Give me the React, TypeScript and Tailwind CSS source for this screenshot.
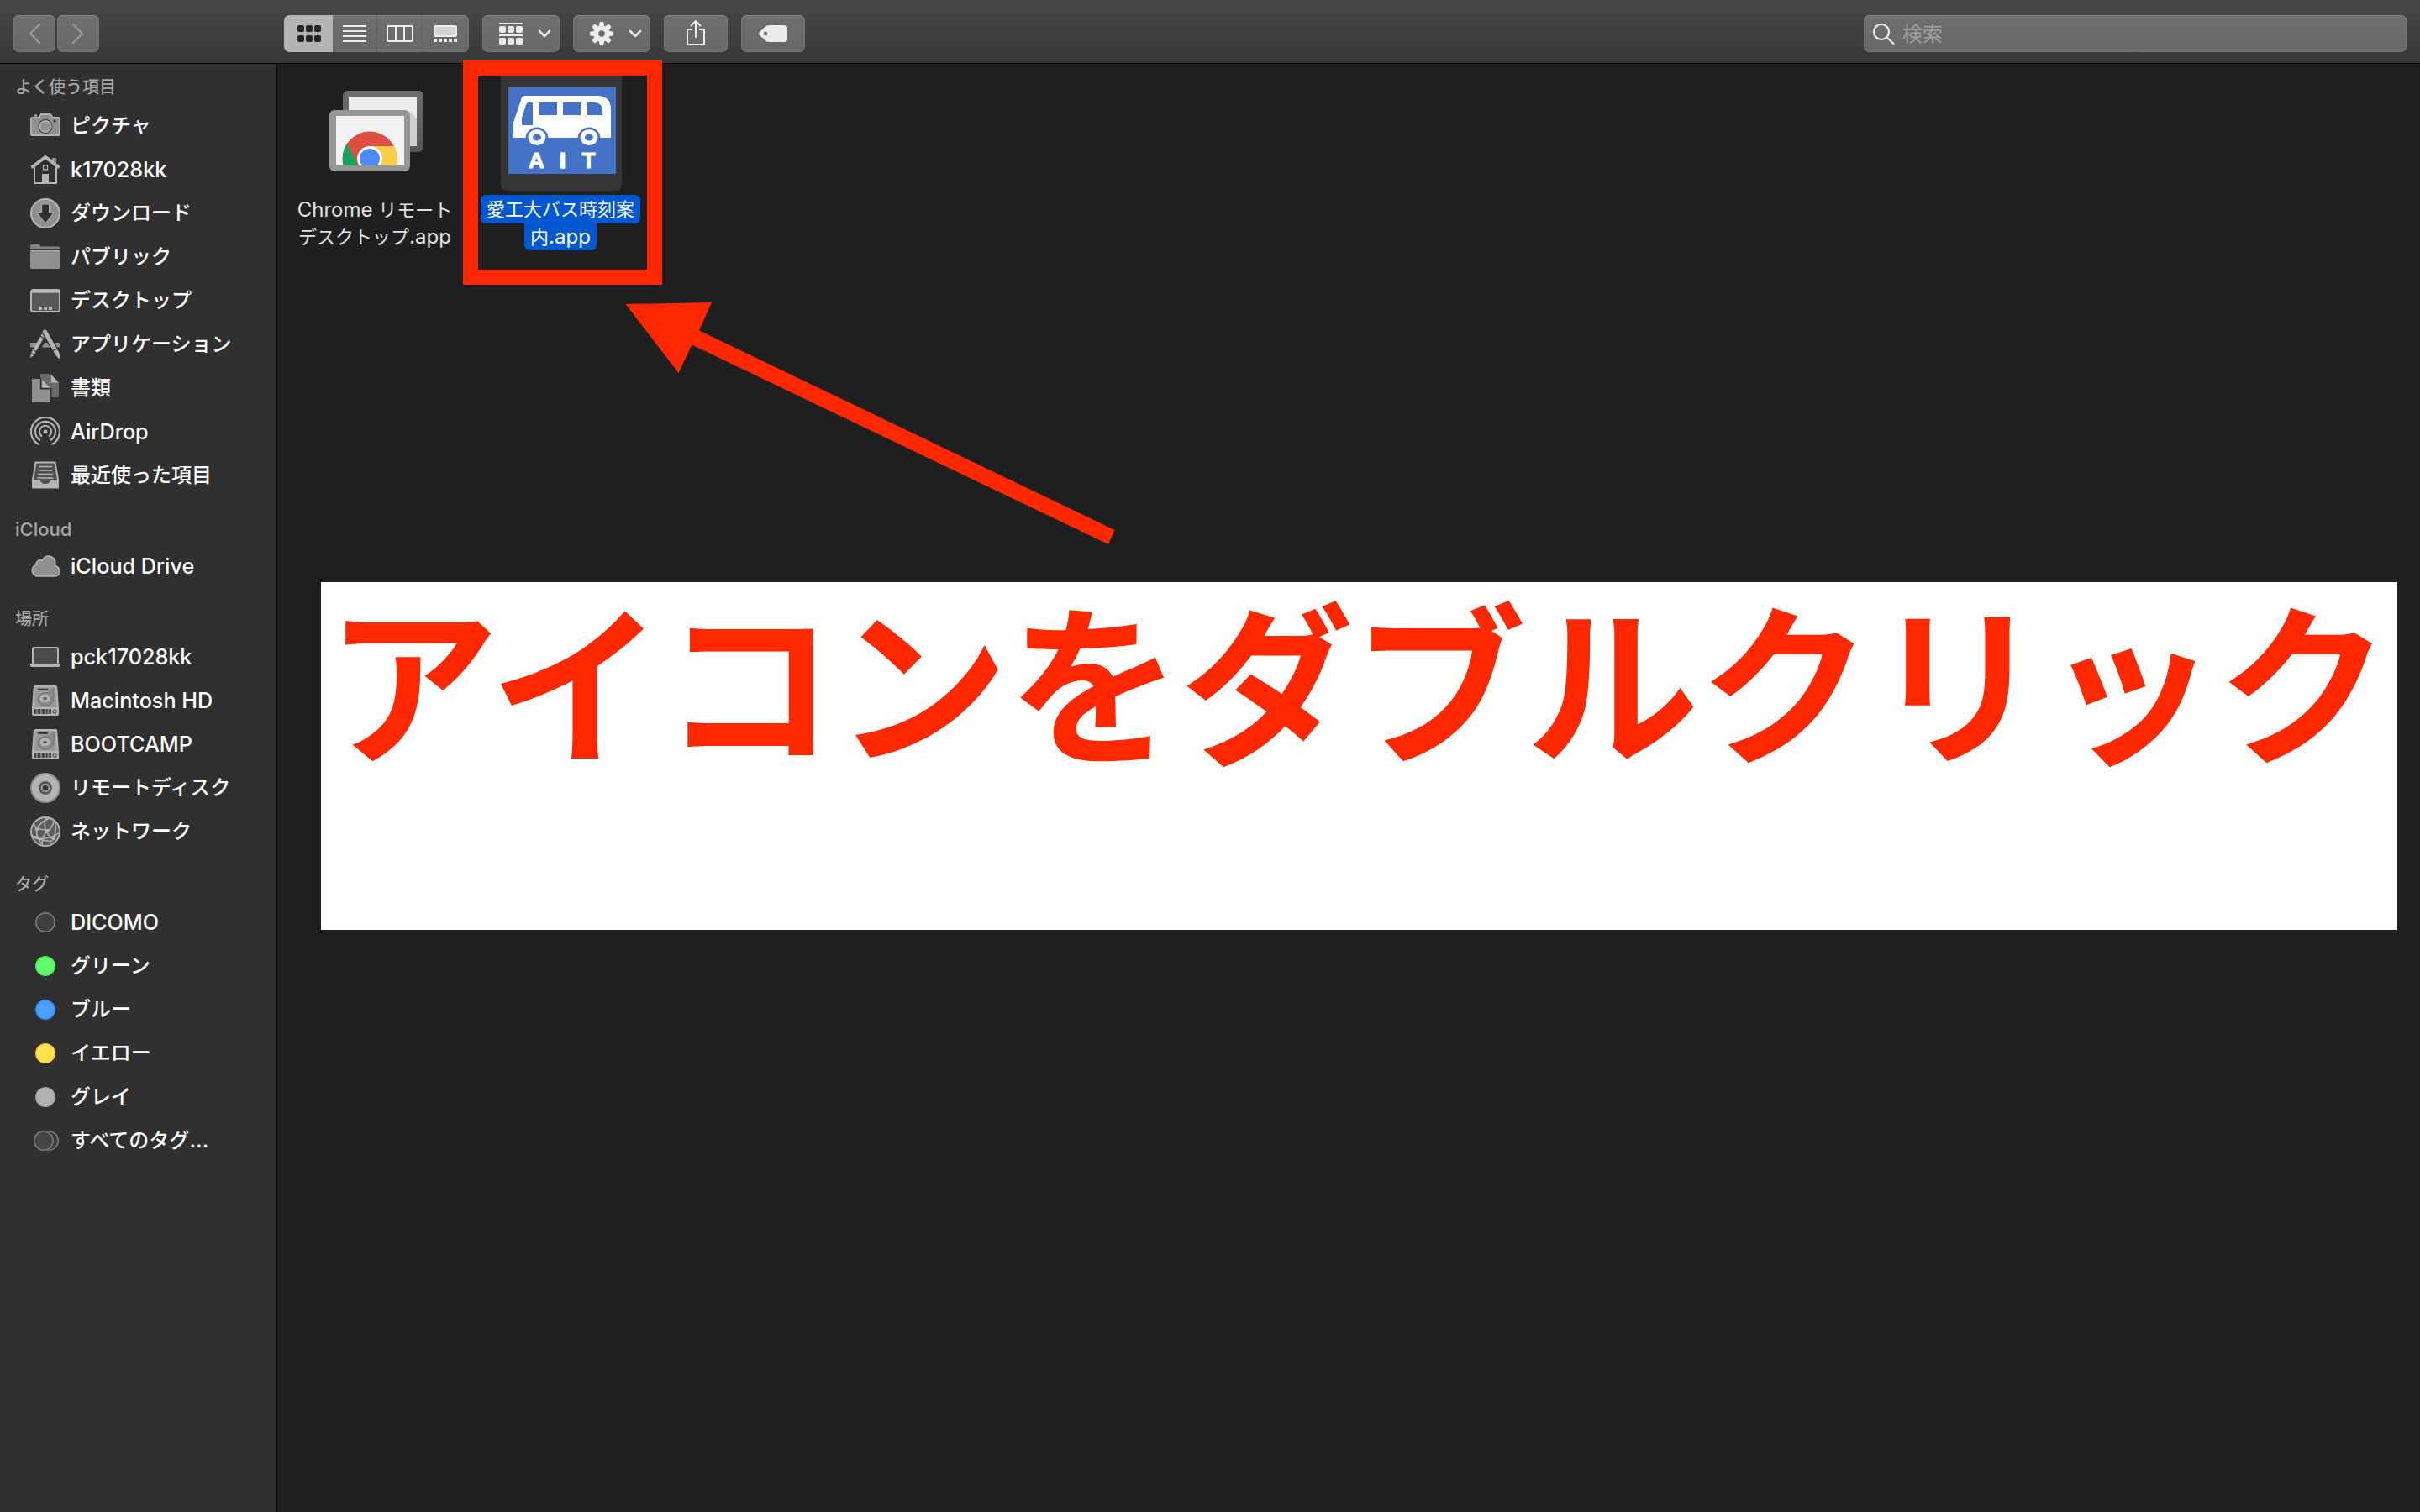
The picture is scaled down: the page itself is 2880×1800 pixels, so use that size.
import React from "react";

const JP = /([\u3000-\u30ff\u4e00-\u9fff]+)/;

/* Renders mixed text; Japanese runs are set slightly smaller than Latin ones. */
function Mixed({ text, jp }: { text: string; jp: string }) {
  return (
    <>
      {text.split(JP).map((part, i) =>
        part === "" ? null : JP.test(part) ? (
          <span key={i} className={jp}>{part}</span>
        ) : (
          <span key={i}>{part}</span>
        )
      )}
    </>
  );
}

const G = "#b4b4b4";
const M = "#909090";
const BG = "#303030";

function Svg({ children }: { children: React.ReactNode }) {
  return (
    <svg width="36" height="36" viewBox="0 0 36 36" fill="none" className="block shrink-0">
      {children}
    </svg>
  );
}

const Camera = () => (
  <Svg>
    <rect x="4" y="4.500" width="4" height="2" fill={G} />
    <path d="M2 8h8l3-4h11l3 4h7a1 1 0 0 1 1 1v19a1 1 0 0 1-1 1H2a1 1 0 0 1-1-1V9a1 1 0 0 1 1-1z" fill={M} stroke={G} strokeWidth="1.800" />
    <circle cx="18" cy="18.500" r="8.500" fill={BG} />
    <circle cx="18" cy="18.500" r="6.700" fill={M} stroke={G} strokeWidth="1.800" />
    <circle cx="29" cy="12" r="1.500" fill={BG} />
  </Svg>
);
const House = () => (
  <Svg>
    <path d="M26 4h5v10l-5-5z" fill={M} />
    <path d="M5 14v20h26V14" stroke={G} strokeWidth="2" />
    <path d="M1.500 15.500 18 3l16.500 12.500" stroke={G} strokeWidth="4" />
    <rect x="15.500" y="13" width="5" height="5" stroke={G} strokeWidth="1.200" />
    <rect x="14" y="23" width="8" height="11" fill={G} />
  </Svg>
);
const Download = () => (
  <Svg>
    <circle cx="18" cy="18" r="17" fill={M} stroke={G} strokeWidth="2" />
    <path d="M13.500 7h9v10H28L18 30 8 17h5.500z" fill={BG} stroke={G} strokeWidth="1" />
  </Svg>
);
const Folder = () => (
  <Svg>
    <path d="M0 9V5q0-2 2-2h8q1.500 0 2.500 2.500H34q2 0 2 2V9z" fill="#838383" />
    <path d="M0 11q0-1 1-1h34q1 0 1 1v19q0 2-2 2H2q-2 0-2-2z" fill={M} />
    <path d="M1 10.500h34" stroke={G} strokeWidth="1" />
  </Svg>
);
const Desktop = () => (
  <Svg>
    <rect x="1" y="5" width="34" height="26" rx="2.500" fill="#585858" stroke={G} strokeWidth="2" />
    <path d="M1 7h34" stroke={G} strokeWidth="3.500" />
    <path d="M10 25h4v4h-4zM16 25h4v4h-4zM22 25h4v4h-4z" fill={G} />
  </Svg>
);
const Apps = () => (
  <Svg>
    <path d="M0 16h9l-3 5.500H0zM17 16h5l3 5.500H14zM27 16h9v5.500h-6z" fill={M} />
    <path d="M16 6 3 29" stroke={G} strokeWidth="4.500" />
    <path d="m1 29-1 5 4.500-3z" fill={G} />
    <path d="m17.500 3 14 25" stroke={BG} strokeWidth="7.500" />
    <path d="m17.500 3 14 25" stroke={G} strokeWidth="5" strokeLinecap="round" />
    <path d="m29 29 5-2.500 2 8-2 .5z" fill={G} />
    <path d="m12 8 5 3M26.500 26l6-3.500M4 25l4 2" stroke={BG} strokeWidth="1.300" />
  </Svg>
);
const Docs = () => (
  <Svg>
    <path d="M12 1h11v10h11v18H12z" fill="#6a6a6a" />
    <path d="M24.500 1.500 34 11.500h-9.500z" fill={G} />
    <path d="M2 7h11v11h11v17H2z" fill={M} />
    <path d="M12.500 6v12.800h12.200V34" stroke={BG} strokeWidth="1.500" />
    <path d="M14 8 23.500 17.500H14z" fill={G} />
  </Svg>
);
const AirDrop = () => (
  <Svg>
    <g stroke={G} strokeWidth="2.200">
      <path d="M10.500 33.200a17 17 0 1 1 15 0" />
      <path d="M12 28.200a12 12 0 1 1 12 0" />
      <path d="M14 23.500a7 7 0 1 1 8 0" />
    </g>
    <circle cx="18" cy="18" r="2.500" fill={G} />
  </Svg>
);
const Tray = () => (
  <Svg>
    <path d="M6.500 2.500h23L33 23v9.500H3V23z" fill="#505050" stroke={G} strokeWidth="2" strokeLinejoin="round" />
    <path d="M3 24h9q1 4 6 4t6-4h9v8.500H3z" fill={G} />
    <path d="M10 7.500h16M9.500 12h17M9 16.500h18M8.500 21h19" stroke={G} strokeWidth="1.600" />
  </Svg>
);
const Cloud = () => (
  <Svg>
    <path d="M8 30a7 7 0 0 1-1-13.500q0-5 5-6 1.500 0 2.500.500Q17 6 22 6q8 1 8 9 0 1.500-.5 2.500 5.500 1.500 5.500 6.500 0 6-6 6z" fill={M} stroke={G} strokeWidth="1.500" />
  </Svg>
);
const Laptop = () => (
  <Svg>
    <rect x="3" y="7" width="30" height="20" rx="1.500" fill="#4c4c4c" stroke={G} strokeWidth="2" />
    <path d="M0 26h36v1.500q0 2.500-2.500 2.500h-31Q0 30 0 27.500z" fill={G} />
  </Svg>
);
const Drive = () => (
  <Svg>
    <path d="M6 0h24q2 0 2.200 2L34 27v7q0 2-2 2H4q-2 0-2-2v-7L3.800 2Q4 0 6 0z" fill={G} />
    <path d="M6 2h24l1.500 24h-27z" fill="#9a9a9a" />
    <path d="M9 4.800h12" stroke={BG} strokeWidth="2" />
    <path d="M28 4v12q-1 8-11 8-8-1-8-8 1-7 10-7 5 0 9-5z" fill="#8a8a8a" stroke="#707070" strokeWidth="1" />
    <ellipse cx="17.500" cy="15.500" rx="6" ry="5" fill={G} />
    <ellipse cx="17.500" cy="15.500" rx="2.500" ry="1.800" fill="#5a5a5a" />
    <path d="M4 28h21v6H4z" fill="#484848" />
    <path d="M8 28v6M13 28v6M18 28v6M21.500 28v6" stroke={M} strokeWidth="1.500" />
    <circle cx="29" cy="31" r="2" stroke="#555" strokeWidth="1.200" />
  </Svg>
);
const Disc = () => (
  <Svg>
    <circle cx="18" cy="18" r="17" fill={G} stroke="#8c8c8c" strokeWidth="2" />
    <circle cx="18" cy="18" r="8" fill="#5a5a5a" />
    <circle cx="18" cy="18" r="4.300" fill="#3a3a3a" stroke={G} strokeWidth="1.500" />
  </Svg>
);
const Network = () => (
  <Svg>
    <circle cx="18" cy="18" r="17" fill="#5c5c5c" stroke={G} strokeWidth="1.800" />
    <g stroke={G} strokeWidth="1.500">
      <path d="M4 9q3 8 20 7M8 15q3-8 15-13M8 15q-2 8 6 18M19 1q-4 8 0 16t8 10M29 5q-4 10-9 13t-6 16M1 22q15 10 34-3M2 24l5 0q6 6 20 5M27 27q4-7 3-20" />
    </g>
    <circle cx="8" cy="15" r="2.300" fill={G} />
    <circle cx="7.500" cy="25" r="2.300" fill={G} />
    <circle cx="20" cy="17" r="2" fill={G} />
    <circle cx="28" cy="26" r="2.300" fill={G} />
  </Svg>
);
const Dot = ({ fill, stroke }: { fill: string; stroke: string }) => (
  <Svg>
    <circle cx="18" cy="18" r="11.200" fill={fill} stroke={stroke} strokeWidth="1.500" />
  </Svg>
);
const AllTags = () => (
  <Svg>
    <circle cx="22" cy="18" r="11.200" fill="#3c3c3c" stroke="#7d7d7d" strokeWidth="1.500" />
    <circle cx="16" cy="18" r="12.500" fill={BG} />
    <circle cx="16" cy="18" r="11.200" fill="#454545" stroke="#7d7d7d" strokeWidth="1.500" />
  </Svg>
);

type Item = { icon: React.ReactNode; label: string };
const sections: { title: string; head: string; text: string; items: Item[] }[] = [
  {
    title: "よく使う項目",
    head: "h-12",
    text: "text-[20px] pb-px",
    items: [
      { icon: <Camera />, label: "ピクチャ" },
      { icon: <House />, label: "k17028kk" },
      { icon: <Download />, label: "ダウンロード" },
      { icon: <Folder />, label: "パブリック" },
      { icon: <Desktop />, label: "デスクトップ" },
      { icon: <Apps />, label: "アプリケーション" },
      { icon: <Docs />, label: "書類" },
      { icon: <AirDrop />, label: "AirDrop" },
      { icon: <Tray />, label: "最近使った項目" },
    ],
  },
  { title: "iCloud", head: "h-14", text: "text-[22px] pt-1", items: [{ icon: <Cloud />, label: "iCloud Drive" }] },
  {
    title: "場所",
    head: "h-14",
    text: "text-[20px] pt-0.5",
    items: [
      { icon: <Laptop />, label: "pck17028kk" },
      { icon: <Drive />, label: "Macintosh HD" },
      { icon: <Drive />, label: "BOOTCAMP" },
      { icon: <Disc />, label: "リモートディスク" },
      { icon: <Network />, label: "ネットワーク" },
    ],
  },
  {
    title: "タグ",
    head: "h-14",
    text: "text-[20px] pt-0.5",
    items: [
      { icon: <Dot fill="#3f3f3f" stroke="#7d7d7d" />, label: "DICOMO" },
      { icon: <Dot fill="#62fb6c" stroke="#50e85c" />, label: "グリーン" },
      { icon: <Dot fill="#4a9fff" stroke="#2f8bf5" />, label: "ブルー" },
      { icon: <Dot fill="#ffe152" stroke="#f5cf35" />, label: "イエロー" },
      { icon: <Dot fill="#b2b2b2" stroke="#a3a3a3" />, label: "グレイ" },
      { icon: <AllTags />, label: "すべてのタグ..." },
    ],
  },
];

const btn =
  "flex h-11 shrink-0 items-center rounded-[7px] bg-gradient-to-b from-[#6f6f6f] to-[#686868] shadow-[inset_0_1px_0_#858585,inset_0_0_0_1px_#747474]";

const Chevron = () => (
  <svg width="16" height="10" viewBox="0 0 16 10" fill="none">
    <path d="m2 2 6 6 6-6" stroke="#e8e8e8" strokeWidth="2.600" strokeLinecap="round" strokeLinejoin="round" />
  </svg>
);

function Toolbar() {
  return (
    <header className="flex h-[76px] shrink-0 items-start border-b border-black bg-gradient-to-b from-[#474747] to-[#383838] pt-[18px] pl-4 pr-4">
      <div className="flex gap-0.5">
        <div className={`${btn} w-[50px] justify-center`}>
          <svg width="16" height="26" viewBox="0 0 16 26" fill="none">
            <path d="M14 2 3 13l11 11" stroke="#989898" strokeWidth="2.400" strokeLinecap="round" strokeLinejoin="round" />
          </svg>
        </div>
        <div className={`${btn} w-[50px] justify-center`}>
          <svg width="16" height="26" viewBox="0 0 16 26" fill="none">
            <path d="m2 2 11 11L2 24" stroke="#989898" strokeWidth="2.400" strokeLinecap="round" strokeLinejoin="round" />
          </svg>
        </div>
      </div>

      <div className={`${btn} ml-[220px] w-[220px] overflow-hidden`}>
        <div className="flex h-full w-[58px] items-center justify-center bg-[#b3b3b3] pl-0.5">
          <svg width="28" height="20" fill="#262626">
            {[0, 10, 20].map((x) => [0, 12].map((y) => <rect key={`${x}-${y}`} x={x} y={y} width="8" height="8" rx="2" />))}
          </svg>
        </div>
        <div className="flex h-full w-[53px] items-center border-r border-[#5f5f5f] pl-3">
          <svg width="28" height="20" fill="#ececec">
            {[0, 6, 12, 18].map((y) => <rect key={y} y={y} width="28" height="2" />)}
          </svg>
        </div>
        <div className="flex h-full w-[54px] items-center border-r border-[#5f5f5f] pl-[11px]">
          <svg width="32" height="20" fill="none" stroke="#ececec" strokeWidth="2">
            <rect x="1" y="1" width="30" height="18" rx="1.500" />
            <path d="M11 1v18M21 1v18" />
          </svg>
        </div>
        <div className="flex h-full w-[55px] items-center pl-[13px]">
          <svg width="28" height="20" fill="#ececec">
            <rect x="1" y="1" width="26" height="12" rx="1.500" fill="#d4d4d4" stroke="#ececec" strokeWidth="2" />
            {[0, 6, 12, 18, 24].map((x) => <rect key={x} x={x} y="16" width="4" height="4" />)}
          </svg>
        </div>
      </div>

      <div className={`${btn} ml-4 w-[92px] pl-5`}>
        <svg width="28" height="26" fill="#ececec">
          <rect width="28" height="2" />
          <rect y="14" width="28" height="2" />
          {[0, 10, 20].map((x) => [4, 18].map((y) => <rect key={`${x}-${y}`} x={x} y={y} width="8" height="8" rx="2" />))}
        </svg>
        <span className="ml-[18px]"><Chevron /></span>
      </div>

      <div className={`${btn} ml-4 w-[92px] pl-5`}>
        <svg width="28" height="28" viewBox="-14 -14 28 28" fill="none">
          <circle r="6.800" stroke="#ececec" strokeWidth="6" />
          {[0, 45, 90, 135, 180, 225, 270, 315].map((a) => (
            <path key={a} d="M-3.200-9h6.400L2.300-14h-4.600z" fill="#ececec" transform={`rotate(${a})`} />
          ))}
        </svg>
        <span className="ml-[18px]"><Chevron /></span>
      </div>

      <div className={`${btn} ml-4 w-[76px] justify-center`}>
        <svg width="22" height="32" viewBox="0 0 22 32" fill="none" stroke="#ececec" strokeWidth="2" className="-mt-0.5">
          <path d="M7 12H1v18h20V12h-6" />
          <path d="M11 21V2M5.500 7.500 11 2l5.500 5.500" strokeLinecap="round" strokeLinejoin="round" />
        </svg>
      </div>

      <div className={`${btn} ml-4 w-[76px] justify-center`}>
        <svg width="34" height="20" viewBox="0 0 34 20">
          <path d="M12 0h18.500Q34 0 34 3.500v13q0 3.500-3.500 3.500H12q-2.500 0-4.500-2L1 12q-2-2 0-4l6.500-6Q9.500 0 12 0z" fill="#ececec" />
          <circle cx="8" cy="10" r="2.200" fill="#6b6b6b" />
        </svg>
      </div>

      <div className={`${btn} ml-auto w-[646px] pl-2.5`}>
        <svg width="28" height="28" viewBox="0 0 28 28" fill="none" stroke="#ececec" strokeWidth="2.200" className="mt-0.5">
          <circle cx="11" cy="11" r="9" />
          <path d="m17.500 17.500 8 7.500" strokeLinecap="round" />
        </svg>
        <span className="mt-0.5 ml-2 text-[24px] leading-none text-[#a0a0a0]">検索</span>
      </div>
    </header>
  );
}

function Sidebar() {
  return (
    <aside className="flex w-[330px] shrink-0 flex-col border-r-2 border-black bg-[#303030]">
      {sections.map((s) => (
        <section key={s.title}>
          <div className={`${s.head} flex flex-col justify-end`}>
            <div className={`${s.text} flex h-10 items-center pl-[18px] font-medium text-[#a6a6a6]`}>{s.title}</div>
          </div>
          {s.items.map((it) => (
            <div key={it.label} className="flex h-[52px] items-center gap-3 pl-9 text-[25.200px] font-medium whitespace-nowrap text-white">
              {it.icon}
              <span className={JP.test(it.label) ? "leading-none" : "pt-0.5 leading-none"}>
                <Mixed text={it.label} jp="text-[24px]" />
              </span>
            </div>
          ))}
        </section>
      ))}
    </aside>
  );
}

function ChromeRemote() {
  return (
    <svg width="112" height="98" viewBox="0 0 112 98">
      <defs>
        <clipPath id="screen"><rect x="8" y="30" width="81" height="59" /></clipPath>
        <linearGradient id="back" x1="0" y1="0" x2="0" y2="1">
          <stop offset="0" stopColor="#6e6e6e" /><stop offset="1" stopColor="#555" />
        </linearGradient>
      </defs>
      <rect x="16" y="0" width="96" height="73" rx="6" fill="url(#back)" />
      <rect x="23" y="7" width="81" height="59" fill="#ececec" />
      <path d="m96 25 8 8v33h-8z" fill="#cfcfcf" />
      <rect x="0" y="23" width="96" height="73" rx="6" fill="#969696" />
      <rect x="8" y="30" width="81" height="59" fill="#f3f3f3" />
      <g clipPath="url(#screen)">
        <circle cx="48" cy="81" r="32.500" fill="#dd4f43" />
        <path d="M48 81V66h29a32.500 32.500 0 0 1-12.700 43z" fill="#ffcd46" />
        <path d="M21 63a32.500 32.500 0 0 0 27 50V81L34 89z" fill="#19a15f" />
        <circle cx="48" cy="81" r="15" fill="#fff" />
        <circle cx="48" cy="81" r="12" fill="#4c8bf5" />
      </g>
    </svg>
  );
}

function BusIcon() {
  return (
    <div className="flex h-[103px] w-32 flex-col bg-[#4472c6]">
      <svg width="128" height="70" viewBox="0 0 128 70" className="block shrink-0">
        <path d="M19 10h88q15 1 15 16v34H6V42l9-27q1-5 4-5z" fill="#fff" />
        <path d="M24 18h5v27H16V36l5-15q1-3 3-3zM37 18h21v15H37zM65 18h21v15H65zM94 18h9q9 1 9 9v6H94z" fill="#4472c6" />
        {[34, 96].map((x) => (
          <g key={x}>
            <path d={`M${x - 13.5} 61a13.500 13.500 0 0 1 27 0z`} fill="#4472c6" />
            <ellipse cx={x} cy="59.500" rx="10.500" ry="9.500" fill="#fff" />
            <ellipse cx={x} cy="59.500" rx="5" ry="4" fill="#4472c6" />
          </g>
        ))}
      </svg>
      <div className="flex pl-[23px] font-['Liberation_Sans'] text-[26px] leading-[34px] font-bold text-white">
        <span className="w-[22px] text-center [-webkit-text-stroke:1px_white]">A</span>
        <span className="w-10 text-center [-webkit-text-stroke:1.5px_white]">I</span>
        <span className="w-[22px] text-center [-webkit-text-stroke:1px_white]">T</span>
      </div>
    </div>
  );
}

export default function App() {
  return (
    <div className="relative flex h-[1800px] w-[2880px] flex-col overflow-hidden bg-[#1f1f1f] font-[Inter,'Noto_Sans_CJK_JP',sans-serif]">
      <Toolbar />
      <div className="flex min-h-0 flex-1">
        <Sidebar />
        <main className="flex min-w-0 flex-1 flex-col">
          <div className="flex h-[617px] items-start">
            <div className="ml-[6px] flex w-[220px] flex-col items-center pt-8 text-[24px] leading-[32px] text-[#e2e2e2]">
              <div className="h-[126px] pl-1"><ChromeRemote /></div>
              <div className="whitespace-nowrap"><Mixed text="Chrome リモート" jp="text-[22px]" /></div>
              <div className="whitespace-nowrap"><Mixed text="デスクトップ.app" jp="text-[22px]" /></div>
            </div>
            <div className="-mt-1 ml-[-5px] h-[267px] w-[237px] border-[18px] border-[#ff2800]">
              <div className="flex flex-col items-center pr-[3px] text-[24px] text-white">
                <div className="flex h-[137px] w-36 justify-center rounded-b-lg bg-[#363636] pt-3.5 pl-px"><BusIcon /></div>
                <div className="mt-[5px] mr-0.5 flex h-[34px] w-[190px] items-center justify-center rounded-[6px] bg-[#0058d0] whitespace-nowrap"><Mixed text="愛工大バス時刻案" jp="text-[22px]" /></div>
                <div className="mr-0.5 flex h-8 w-[86px] items-center justify-center rounded-b-[6px] bg-[#0058d0] leading-8 whitespace-nowrap"><span><Mixed text="内.app" jp="text-[22px]" /></span></div>
              </div>
            </div>
          </div>
          <div className="ml-[52px] h-[414px] w-[2471px] bg-white pt-[3px] pl-[6px] text-[205.500px] leading-[248px] font-bold whitespace-nowrap text-[#ff2800]">
            アイコンをダブルクリック
          </div>
        </main>
      </div>
      <svg className="absolute top-[355px] left-[740px]" width="592" height="298" viewBox="740 355 592 298">
        <path d="M744.500 362 847 360l-15 33.500L1326.500 631l-7.500 17L823.500 410.500 807.500 444z" fill="#ff2800" />
      </svg>
    </div>
  );
}
